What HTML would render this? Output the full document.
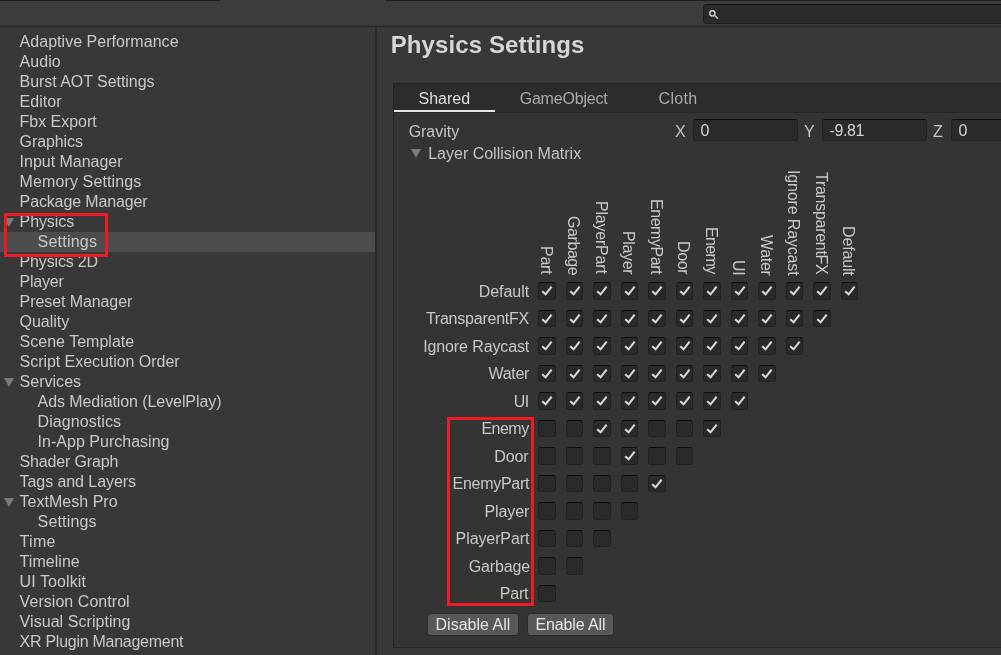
<!DOCTYPE html>
<html lang="en"><head><meta charset="utf-8"><title>Project Settings - Physics</title>
<style>
*{box-sizing:border-box;margin:0;padding:0}
html,body{width:1001px;height:655px;overflow:hidden;background:#383838}
body{position:relative;will-change:transform;font-family:"Liberation Sans",sans-serif;font-size:16px;color:#c4c4c4;line-height:20px}
.abs,.it,.rl,.cl,.cb,.lbl,.inp,.btn,.tab{position:absolute;white-space:nowrap}
#topbar{left:0;top:0;width:1001px;height:26px;background:#3c3c3c}
#topline1{left:0;top:0;width:220px;height:1px;background:#1f1f1f}
#topline2{left:385px;top:0;width:616px;height:1px;background:#1f1f1f}
#topborder{left:0;top:25px;width:1001px;height:2px;background:#252525;border-top:1px solid #363636}
#search{left:703px;top:4px;width:320px;height:20px;background:#2a2a2a;border:1px solid #1e1e1e;border-top-color:#0f0f0f;border-radius:4px}
#divider{left:375px;top:27px;width:2px;height:628px;background:#272727}
#sel{left:0;top:232px;width:375px;height:20px;background:#4d4d4d}
.it{height:20px;line-height:20px;top:0;color:#c8c8c8}
.tri{position:absolute;width:0;height:0;border-left:5.2px solid transparent;border-right:5.2px solid transparent;border-top:9px solid #7a7a7a}
#title{top:30px;font-size:24px;line-height:30px;font-weight:bold;color:#d6d6d6}
#box{left:393px;top:83px;width:640px;height:565px;background:#343434;border:1px solid #242424}
#tabbar{left:394px;top:84px;width:607px;height:28px;background:#2c2c2c}
#tabline{left:394px;top:112px;width:607px;height:1px;background:#242424}
#tabsel{left:394px;top:110px;width:101px;height:2px;background:#e6e6e6}
.tab{top:87.5px;height:20px;color:#aaaaaa}
.lbl{height:20px;color:#c4c4c4}
.inp{top:119px;height:22px;background:#2a2a2a;border:1px solid #212121;border-top-color:#0d0d0d;border-radius:3px;color:#d2d2d2;line-height:20px;padding:1px 0 0 6.5px}
.rl{height:20px;color:#c8c8c8}
.cl{height:20px;transform-origin:0 0;transform:rotate(90deg);color:#c8c8c8}
.cb{width:17.5px;height:17.5px;background:#2a2a2a;border:1px solid #212121;border-top-color:#0c0c0c;border-radius:3px}
.cb svg{position:absolute;left:-1px;top:-1px;width:17.5px;height:17.5px}
.btn{top:613px;height:23px;background:#585858;border:1px solid #2d2d2d;border-bottom-color:#262626;border-radius:4px}
.bt{position:absolute;white-space:nowrap;color:#e4e4e4;height:20px}
.red{position:absolute;border:3px solid #ed1c24}
</style></head><body>
<div class="abs" id="topbar"></div><div class="abs" id="topline1"></div><div class="abs" id="topline2"></div><div class="abs" id="topborder"></div>
<div class="abs" id="search"><svg width="14" height="14" viewBox="0 0 14 14" style="position:absolute;left:4px;top:3px"><circle cx="4.4" cy="5.3" r="2.6" fill="none" stroke="#cfcfcf" stroke-width="1.5"/><path d="M6.3 7.2 L9.6 10.2" stroke="#cfcfcf" stroke-width="1.4" stroke-linecap="round"/></svg></div>
<div class="abs" id="divider"></div>
<div class="abs" id="sel"></div>

<div class="it" style="left:19.6px;top:32px;letter-spacing:0.033px;">Adaptive Performance</div>
<div class="it" style="left:19.6px;top:52px;letter-spacing:0.028px;">Audio</div>
<div class="it" style="left:19.6px;top:72px;letter-spacing:-0.048px;">Burst AOT Settings</div>
<div class="it" style="left:19.6px;top:92px;letter-spacing:0.05px;">Editor</div>
<div class="it" style="left:19.6px;top:112px;letter-spacing:-0.026px;">Fbx Export</div>
<div class="it" style="left:19.6px;top:132px;letter-spacing:-0.105px;">Graphics</div>
<div class="it" style="left:19.6px;top:152px;letter-spacing:-0.026px;">Input Manager</div>
<div class="it" style="left:19.6px;top:172px;letter-spacing:0.112px;">Memory Settings</div>
<div class="it" style="left:19.6px;top:192px;letter-spacing:-0.137px;">Package Manager</div>
<div class="tri" style="left:3.8px;top:218px"></div>
<div class="it" style="left:19.6px;top:212px;letter-spacing:-0.098px;">Physics</div>
<div class="it" style="left:37.6px;top:232px;letter-spacing:0.218px;">Settings</div>
<div class="it" style="left:19.6px;top:252px;letter-spacing:-0.167px;">Physics 2D</div>
<div class="it" style="left:19.6px;top:272px;letter-spacing:-0.224px;">Player</div>
<div class="it" style="left:19.6px;top:292px;letter-spacing:-0.086px;">Preset Manager</div>
<div class="it" style="left:19.6px;top:312px;letter-spacing:-0.043px;">Quality</div>
<div class="it" style="left:19.6px;top:332px;letter-spacing:0.009px;">Scene Template</div>
<div class="it" style="left:19.6px;top:352px;letter-spacing:-0.047px;">Script Execution Order</div>
<div class="tri" style="left:3.8px;top:378px"></div>
<div class="it" style="left:19.6px;top:372px;letter-spacing:0.014px;">Services</div>
<div class="it" style="left:37.6px;top:392px;letter-spacing:-0.083px;">Ads Mediation (LevelPlay)</div>
<div class="it" style="left:37.6px;top:412px;letter-spacing:0.071px;">Diagnostics</div>
<div class="it" style="left:37.6px;top:432px;letter-spacing:0.017px;">In-App Purchasing</div>
<div class="it" style="left:19.6px;top:452px;letter-spacing:-0.155px;">Shader Graph</div>
<div class="it" style="left:19.6px;top:472px;letter-spacing:-0.074px;">Tags and Layers</div>
<div class="tri" style="left:3.8px;top:498px"></div>
<div class="it" style="left:19.6px;top:492px;letter-spacing:0.017px;">TextMesh Pro</div>
<div class="it" style="left:37.6px;top:512px;letter-spacing:0.168px;">Settings</div>
<div class="it" style="left:19.6px;top:532px;letter-spacing:0.285px;">Time</div>
<div class="it" style="left:19.6px;top:552px;letter-spacing:0.036px;">Timeline</div>
<div class="it" style="left:19.6px;top:572px;letter-spacing:0.088px;">UI Toolkit</div>
<div class="it" style="left:19.6px;top:592px;letter-spacing:0.049px;">Version Control</div>
<div class="it" style="left:19.6px;top:612px;letter-spacing:0.055px;">Visual Scripting</div>
<div class="it" style="left:19.6px;top:632px;letter-spacing:-0.267px;">XR Plugin Management</div>
<div class="red" style="left:4px;top:213px;width:104px;height:44px"></div>
<div class="abs" id="title" style="left:390.73px;top:30px;letter-spacing:0.11px;">Physics Settings</div>
<div class="abs" id="box"></div><div class="abs" id="tabbar"></div><div class="abs" id="tabline"></div><div class="abs" id="tabsel"></div>
<div class="tab" style="left:418.56px;top:88.5px;letter-spacing:-0.021px;color:#dedede">Shared</div>
<div class="tab" style="left:519.64px;top:88.5px;letter-spacing:-0.183px;">GameObject</div>
<div class="tab" style="left:658.55px;top:88.5px;letter-spacing:0.316px;">Cloth</div>
<div class="lbl" style="left:408.65px;top:121.5px;letter-spacing:-0.027px;">Gravity</div>
<div class="lbl" style="left:675px;top:121.5px">X</div>
<div class="inp" style="left:693px;width:105px">0</div>
<div class="lbl" style="left:804px;top:121.5px">Y</div>
<div class="inp" style="left:822px;width:105px;letter-spacing:-0.4px">-9.81</div>
<div class="lbl" style="left:933px;top:121.5px">Z</div>
<div class="inp" style="left:951px;width:105px">0</div>
<div class="tri" style="left:410.5px;top:149px"></div>
<div class="lbl" style="left:428.19px;top:143.5px;letter-spacing:0.0px;">Layer Collision Matrix</div>
<div class="rl" style="left:478.69px;top:281.5px;letter-spacing:-0.049px;">Default</div>
<div class="rl" style="left:425.88px;top:309.0px;letter-spacing:-0.228px;">TransparentFX</div>
<div class="rl" style="left:423.21px;top:336.5px;letter-spacing:-0.118px;">Ignore Raycast</div>
<div class="rl" style="left:488.58px;top:364.0px;letter-spacing:-0.332px;">Water</div>
<div class="rl" style="left:513.72px;top:391.5px;letter-spacing:-0.616px;">UI</div>
<div class="rl" style="left:481.38px;top:419.0px;letter-spacing:-0.498px;">Enemy</div>
<div class="rl" style="left:494.29px;top:446.5px;letter-spacing:-0.146px;">Door</div>
<div class="rl" style="left:452.6px;top:474.0px;letter-spacing:-0.288px;">EnemyPart</div>
<div class="rl" style="left:484.55px;top:501.5px;letter-spacing:-0.1px;">Player</div>
<div class="rl" style="left:455.6px;top:529.0px;letter-spacing:-0.097px;">PlayerPart</div>
<div class="rl" style="left:468.8px;top:556.5px;letter-spacing:-0.173px;">Garbage</div>
<div class="rl" style="left:499.8px;top:584.0px;letter-spacing:-0.205px;">Part</div>
<div class="cl" style="left:555.5px;top:246.26px;letter-spacing:-0.282px">Part</div>
<div class="cl" style="left:583.0px;top:215.52px;letter-spacing:-0.419px">Garbage</div>
<div class="cl" style="left:610.5px;top:201.42px;letter-spacing:-0.207px">PlayerPart</div>
<div class="cl" style="left:638.0px;top:231.12px;letter-spacing:-0.367px">Player</div>
<div class="cl" style="left:665.5px;top:199.3px;letter-spacing:-0.459px">EnemyPart</div>
<div class="cl" style="left:693.0px;top:241.4px;letter-spacing:-0.349px">Door</div>
<div class="cl" style="left:720.5px;top:227.32px;letter-spacing:-0.616px">Enemy</div>
<div class="cl" style="left:748.0px;top:260.36px;letter-spacing:-0.328px">UI</div>
<div class="cl" style="left:775.5px;top:234.7px;letter-spacing:-0.292px">Water</div>
<div class="cl" style="left:803.0px;top:169.68px;letter-spacing:-0.152px">Ignore Raycast</div>
<div class="cl" style="left:830.5px;top:172.0px;letter-spacing:-0.277px">TransparentFX</div>
<div class="cl" style="left:858.0px;top:225.72px;letter-spacing:-0.158px">Default</div>
<div class="cb" style="left:538.25px;top:282.25px"><svg viewBox="0 0 17.5 17.5"><path d="M4.2 9.2 L7.6 12.3 L13.6 4.6" fill="none" stroke="#d8d8d8" stroke-width="2.1"/></svg></div>
<div class="cb" style="left:565.75px;top:282.25px"><svg viewBox="0 0 17.5 17.5"><path d="M4.2 9.2 L7.6 12.3 L13.6 4.6" fill="none" stroke="#d8d8d8" stroke-width="2.1"/></svg></div>
<div class="cb" style="left:593.25px;top:282.25px"><svg viewBox="0 0 17.5 17.5"><path d="M4.2 9.2 L7.6 12.3 L13.6 4.6" fill="none" stroke="#d8d8d8" stroke-width="2.1"/></svg></div>
<div class="cb" style="left:620.75px;top:282.25px"><svg viewBox="0 0 17.5 17.5"><path d="M4.2 9.2 L7.6 12.3 L13.6 4.6" fill="none" stroke="#d8d8d8" stroke-width="2.1"/></svg></div>
<div class="cb" style="left:648.25px;top:282.25px"><svg viewBox="0 0 17.5 17.5"><path d="M4.2 9.2 L7.6 12.3 L13.6 4.6" fill="none" stroke="#d8d8d8" stroke-width="2.1"/></svg></div>
<div class="cb" style="left:675.75px;top:282.25px"><svg viewBox="0 0 17.5 17.5"><path d="M4.2 9.2 L7.6 12.3 L13.6 4.6" fill="none" stroke="#d8d8d8" stroke-width="2.1"/></svg></div>
<div class="cb" style="left:703.25px;top:282.25px"><svg viewBox="0 0 17.5 17.5"><path d="M4.2 9.2 L7.6 12.3 L13.6 4.6" fill="none" stroke="#d8d8d8" stroke-width="2.1"/></svg></div>
<div class="cb" style="left:730.75px;top:282.25px"><svg viewBox="0 0 17.5 17.5"><path d="M4.2 9.2 L7.6 12.3 L13.6 4.6" fill="none" stroke="#d8d8d8" stroke-width="2.1"/></svg></div>
<div class="cb" style="left:758.25px;top:282.25px"><svg viewBox="0 0 17.5 17.5"><path d="M4.2 9.2 L7.6 12.3 L13.6 4.6" fill="none" stroke="#d8d8d8" stroke-width="2.1"/></svg></div>
<div class="cb" style="left:785.75px;top:282.25px"><svg viewBox="0 0 17.5 17.5"><path d="M4.2 9.2 L7.6 12.3 L13.6 4.6" fill="none" stroke="#d8d8d8" stroke-width="2.1"/></svg></div>
<div class="cb" style="left:813.25px;top:282.25px"><svg viewBox="0 0 17.5 17.5"><path d="M4.2 9.2 L7.6 12.3 L13.6 4.6" fill="none" stroke="#d8d8d8" stroke-width="2.1"/></svg></div>
<div class="cb" style="left:840.75px;top:282.25px"><svg viewBox="0 0 17.5 17.5"><path d="M4.2 9.2 L7.6 12.3 L13.6 4.6" fill="none" stroke="#d8d8d8" stroke-width="2.1"/></svg></div>
<div class="cb" style="left:538.25px;top:309.75px"><svg viewBox="0 0 17.5 17.5"><path d="M4.2 9.2 L7.6 12.3 L13.6 4.6" fill="none" stroke="#d8d8d8" stroke-width="2.1"/></svg></div>
<div class="cb" style="left:565.75px;top:309.75px"><svg viewBox="0 0 17.5 17.5"><path d="M4.2 9.2 L7.6 12.3 L13.6 4.6" fill="none" stroke="#d8d8d8" stroke-width="2.1"/></svg></div>
<div class="cb" style="left:593.25px;top:309.75px"><svg viewBox="0 0 17.5 17.5"><path d="M4.2 9.2 L7.6 12.3 L13.6 4.6" fill="none" stroke="#d8d8d8" stroke-width="2.1"/></svg></div>
<div class="cb" style="left:620.75px;top:309.75px"><svg viewBox="0 0 17.5 17.5"><path d="M4.2 9.2 L7.6 12.3 L13.6 4.6" fill="none" stroke="#d8d8d8" stroke-width="2.1"/></svg></div>
<div class="cb" style="left:648.25px;top:309.75px"><svg viewBox="0 0 17.5 17.5"><path d="M4.2 9.2 L7.6 12.3 L13.6 4.6" fill="none" stroke="#d8d8d8" stroke-width="2.1"/></svg></div>
<div class="cb" style="left:675.75px;top:309.75px"><svg viewBox="0 0 17.5 17.5"><path d="M4.2 9.2 L7.6 12.3 L13.6 4.6" fill="none" stroke="#d8d8d8" stroke-width="2.1"/></svg></div>
<div class="cb" style="left:703.25px;top:309.75px"><svg viewBox="0 0 17.5 17.5"><path d="M4.2 9.2 L7.6 12.3 L13.6 4.6" fill="none" stroke="#d8d8d8" stroke-width="2.1"/></svg></div>
<div class="cb" style="left:730.75px;top:309.75px"><svg viewBox="0 0 17.5 17.5"><path d="M4.2 9.2 L7.6 12.3 L13.6 4.6" fill="none" stroke="#d8d8d8" stroke-width="2.1"/></svg></div>
<div class="cb" style="left:758.25px;top:309.75px"><svg viewBox="0 0 17.5 17.5"><path d="M4.2 9.2 L7.6 12.3 L13.6 4.6" fill="none" stroke="#d8d8d8" stroke-width="2.1"/></svg></div>
<div class="cb" style="left:785.75px;top:309.75px"><svg viewBox="0 0 17.5 17.5"><path d="M4.2 9.2 L7.6 12.3 L13.6 4.6" fill="none" stroke="#d8d8d8" stroke-width="2.1"/></svg></div>
<div class="cb" style="left:813.25px;top:309.75px"><svg viewBox="0 0 17.5 17.5"><path d="M4.2 9.2 L7.6 12.3 L13.6 4.6" fill="none" stroke="#d8d8d8" stroke-width="2.1"/></svg></div>
<div class="cb" style="left:538.25px;top:337.25px"><svg viewBox="0 0 17.5 17.5"><path d="M4.2 9.2 L7.6 12.3 L13.6 4.6" fill="none" stroke="#d8d8d8" stroke-width="2.1"/></svg></div>
<div class="cb" style="left:565.75px;top:337.25px"><svg viewBox="0 0 17.5 17.5"><path d="M4.2 9.2 L7.6 12.3 L13.6 4.6" fill="none" stroke="#d8d8d8" stroke-width="2.1"/></svg></div>
<div class="cb" style="left:593.25px;top:337.25px"><svg viewBox="0 0 17.5 17.5"><path d="M4.2 9.2 L7.6 12.3 L13.6 4.6" fill="none" stroke="#d8d8d8" stroke-width="2.1"/></svg></div>
<div class="cb" style="left:620.75px;top:337.25px"><svg viewBox="0 0 17.5 17.5"><path d="M4.2 9.2 L7.6 12.3 L13.6 4.6" fill="none" stroke="#d8d8d8" stroke-width="2.1"/></svg></div>
<div class="cb" style="left:648.25px;top:337.25px"><svg viewBox="0 0 17.5 17.5"><path d="M4.2 9.2 L7.6 12.3 L13.6 4.6" fill="none" stroke="#d8d8d8" stroke-width="2.1"/></svg></div>
<div class="cb" style="left:675.75px;top:337.25px"><svg viewBox="0 0 17.5 17.5"><path d="M4.2 9.2 L7.6 12.3 L13.6 4.6" fill="none" stroke="#d8d8d8" stroke-width="2.1"/></svg></div>
<div class="cb" style="left:703.25px;top:337.25px"><svg viewBox="0 0 17.5 17.5"><path d="M4.2 9.2 L7.6 12.3 L13.6 4.6" fill="none" stroke="#d8d8d8" stroke-width="2.1"/></svg></div>
<div class="cb" style="left:730.75px;top:337.25px"><svg viewBox="0 0 17.5 17.5"><path d="M4.2 9.2 L7.6 12.3 L13.6 4.6" fill="none" stroke="#d8d8d8" stroke-width="2.1"/></svg></div>
<div class="cb" style="left:758.25px;top:337.25px"><svg viewBox="0 0 17.5 17.5"><path d="M4.2 9.2 L7.6 12.3 L13.6 4.6" fill="none" stroke="#d8d8d8" stroke-width="2.1"/></svg></div>
<div class="cb" style="left:785.75px;top:337.25px"><svg viewBox="0 0 17.5 17.5"><path d="M4.2 9.2 L7.6 12.3 L13.6 4.6" fill="none" stroke="#d8d8d8" stroke-width="2.1"/></svg></div>
<div class="cb" style="left:538.25px;top:364.75px"><svg viewBox="0 0 17.5 17.5"><path d="M4.2 9.2 L7.6 12.3 L13.6 4.6" fill="none" stroke="#d8d8d8" stroke-width="2.1"/></svg></div>
<div class="cb" style="left:565.75px;top:364.75px"><svg viewBox="0 0 17.5 17.5"><path d="M4.2 9.2 L7.6 12.3 L13.6 4.6" fill="none" stroke="#d8d8d8" stroke-width="2.1"/></svg></div>
<div class="cb" style="left:593.25px;top:364.75px"><svg viewBox="0 0 17.5 17.5"><path d="M4.2 9.2 L7.6 12.3 L13.6 4.6" fill="none" stroke="#d8d8d8" stroke-width="2.1"/></svg></div>
<div class="cb" style="left:620.75px;top:364.75px"><svg viewBox="0 0 17.5 17.5"><path d="M4.2 9.2 L7.6 12.3 L13.6 4.6" fill="none" stroke="#d8d8d8" stroke-width="2.1"/></svg></div>
<div class="cb" style="left:648.25px;top:364.75px"><svg viewBox="0 0 17.5 17.5"><path d="M4.2 9.2 L7.6 12.3 L13.6 4.6" fill="none" stroke="#d8d8d8" stroke-width="2.1"/></svg></div>
<div class="cb" style="left:675.75px;top:364.75px"><svg viewBox="0 0 17.5 17.5"><path d="M4.2 9.2 L7.6 12.3 L13.6 4.6" fill="none" stroke="#d8d8d8" stroke-width="2.1"/></svg></div>
<div class="cb" style="left:703.25px;top:364.75px"><svg viewBox="0 0 17.5 17.5"><path d="M4.2 9.2 L7.6 12.3 L13.6 4.6" fill="none" stroke="#d8d8d8" stroke-width="2.1"/></svg></div>
<div class="cb" style="left:730.75px;top:364.75px"><svg viewBox="0 0 17.5 17.5"><path d="M4.2 9.2 L7.6 12.3 L13.6 4.6" fill="none" stroke="#d8d8d8" stroke-width="2.1"/></svg></div>
<div class="cb" style="left:758.25px;top:364.75px"><svg viewBox="0 0 17.5 17.5"><path d="M4.2 9.2 L7.6 12.3 L13.6 4.6" fill="none" stroke="#d8d8d8" stroke-width="2.1"/></svg></div>
<div class="cb" style="left:538.25px;top:392.25px"><svg viewBox="0 0 17.5 17.5"><path d="M4.2 9.2 L7.6 12.3 L13.6 4.6" fill="none" stroke="#d8d8d8" stroke-width="2.1"/></svg></div>
<div class="cb" style="left:565.75px;top:392.25px"><svg viewBox="0 0 17.5 17.5"><path d="M4.2 9.2 L7.6 12.3 L13.6 4.6" fill="none" stroke="#d8d8d8" stroke-width="2.1"/></svg></div>
<div class="cb" style="left:593.25px;top:392.25px"><svg viewBox="0 0 17.5 17.5"><path d="M4.2 9.2 L7.6 12.3 L13.6 4.6" fill="none" stroke="#d8d8d8" stroke-width="2.1"/></svg></div>
<div class="cb" style="left:620.75px;top:392.25px"><svg viewBox="0 0 17.5 17.5"><path d="M4.2 9.2 L7.6 12.3 L13.6 4.6" fill="none" stroke="#d8d8d8" stroke-width="2.1"/></svg></div>
<div class="cb" style="left:648.25px;top:392.25px"><svg viewBox="0 0 17.5 17.5"><path d="M4.2 9.2 L7.6 12.3 L13.6 4.6" fill="none" stroke="#d8d8d8" stroke-width="2.1"/></svg></div>
<div class="cb" style="left:675.75px;top:392.25px"><svg viewBox="0 0 17.5 17.5"><path d="M4.2 9.2 L7.6 12.3 L13.6 4.6" fill="none" stroke="#d8d8d8" stroke-width="2.1"/></svg></div>
<div class="cb" style="left:703.25px;top:392.25px"><svg viewBox="0 0 17.5 17.5"><path d="M4.2 9.2 L7.6 12.3 L13.6 4.6" fill="none" stroke="#d8d8d8" stroke-width="2.1"/></svg></div>
<div class="cb" style="left:730.75px;top:392.25px"><svg viewBox="0 0 17.5 17.5"><path d="M4.2 9.2 L7.6 12.3 L13.6 4.6" fill="none" stroke="#d8d8d8" stroke-width="2.1"/></svg></div>
<div class="cb" style="left:538.25px;top:419.75px"></div>
<div class="cb" style="left:565.75px;top:419.75px"></div>
<div class="cb" style="left:593.25px;top:419.75px"><svg viewBox="0 0 17.5 17.5"><path d="M4.2 9.2 L7.6 12.3 L13.6 4.6" fill="none" stroke="#d8d8d8" stroke-width="2.1"/></svg></div>
<div class="cb" style="left:620.75px;top:419.75px"><svg viewBox="0 0 17.5 17.5"><path d="M4.2 9.2 L7.6 12.3 L13.6 4.6" fill="none" stroke="#d8d8d8" stroke-width="2.1"/></svg></div>
<div class="cb" style="left:648.25px;top:419.75px"></div>
<div class="cb" style="left:675.75px;top:419.75px"></div>
<div class="cb" style="left:703.25px;top:419.75px"><svg viewBox="0 0 17.5 17.5"><path d="M4.2 9.2 L7.6 12.3 L13.6 4.6" fill="none" stroke="#d8d8d8" stroke-width="2.1"/></svg></div>
<div class="cb" style="left:538.25px;top:447.25px"></div>
<div class="cb" style="left:565.75px;top:447.25px"></div>
<div class="cb" style="left:593.25px;top:447.25px"></div>
<div class="cb" style="left:620.75px;top:447.25px"><svg viewBox="0 0 17.5 17.5"><path d="M4.2 9.2 L7.6 12.3 L13.6 4.6" fill="none" stroke="#d8d8d8" stroke-width="2.1"/></svg></div>
<div class="cb" style="left:648.25px;top:447.25px"></div>
<div class="cb" style="left:675.75px;top:447.25px"></div>
<div class="cb" style="left:538.25px;top:474.75px"></div>
<div class="cb" style="left:565.75px;top:474.75px"></div>
<div class="cb" style="left:593.25px;top:474.75px"></div>
<div class="cb" style="left:620.75px;top:474.75px"></div>
<div class="cb" style="left:648.25px;top:474.75px"><svg viewBox="0 0 17.5 17.5"><path d="M4.2 9.2 L7.6 12.3 L13.6 4.6" fill="none" stroke="#d8d8d8" stroke-width="2.1"/></svg></div>
<div class="cb" style="left:538.25px;top:502.25px"></div>
<div class="cb" style="left:565.75px;top:502.25px"></div>
<div class="cb" style="left:593.25px;top:502.25px"></div>
<div class="cb" style="left:620.75px;top:502.25px"></div>
<div class="cb" style="left:538.25px;top:529.75px"></div>
<div class="cb" style="left:565.75px;top:529.75px"></div>
<div class="cb" style="left:593.25px;top:529.75px"></div>
<div class="cb" style="left:538.25px;top:557.25px"></div>
<div class="cb" style="left:565.75px;top:557.25px"></div>
<div class="cb" style="left:538.25px;top:584.75px"></div>
<div class="red" style="left:447px;top:417px;width:87px;height:189px"></div>
<div class="btn" style="left:427px;width:92px"></div><div class="btn" style="left:527px;width:87px"></div>
<div class="bt" style="left:435.55px;top:615px;letter-spacing:0.002px;">Disable All</div>
<div class="bt" style="left:535.55px;top:615px;letter-spacing:-0.138px;">Enable All</div>
</body></html>
